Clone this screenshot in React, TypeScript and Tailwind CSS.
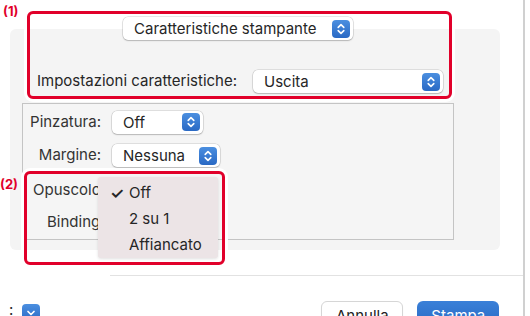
import React from "react";

const Stepper = () => (
    <span className="w-[18px] h-[18px] rounded-[4px] bg-gradient-to-b from-[#4b8fe0] to-[#2a69c4] flex items-center justify-center shrink-0">
        <svg width="18" height="18" viewBox="0 0 18 18" fill="none">
            <path d="M6.2 7.4 L9 4.6 L11.8 7.4" stroke="white" strokeWidth="1.6" strokeLinecap="round" strokeLinejoin="round" />
            <path d="M6.2 10.6 L9 13.4 L11.8 10.6" stroke="white" strokeWidth="1.6" strokeLinecap="round" strokeLinejoin="round" />
        </svg>
    </span>
);

const Popup = ({ label, className }: { label: string; className: string }) => (
    <div
        className={`h-[23px] shrink-0 rounded-[5px] bg-white shadow-[0_0_0_0.5px_rgba(0,0,0,0.18),0_1px_1.5px_rgba(0,0,0,0.18)] flex items-center pl-[11px] pr-[3px] ${className}`}
    >
        <span className="flex-1 text-[15px] leading-none text-[#262626]">{label}</span>
        <Stepper />
    </div>
);

const App = () => {
    return (
        <div className="w-[530px] h-[316px] bg-white flex overflow-hidden font-['Inter',Arial,sans-serif] text-[#262626]">
            <div className="w-[523px] relative flex flex-col pt-[29px]">
                {/* main panel */}
                <div className="shrink-0 ml-[10px] w-[490px] h-[221px] rounded-[6px] bg-[#f4f4f4] flex flex-col">
                    <Popup label="Caratteristiche stampante" className="-mt-[12px] ml-[113px] w-[230px]" />

                    <div className="shrink-0 mt-[30px] flex items-center h-[23px]">
                        <span className="ml-[27px] w-[216px] text-[15px]">Impostazioni caratteristiche:</span>
                        <Popup label="Uscita" className="w-[190px]" />
                    </div>

                    <div className="shrink-0 mt-[10px] ml-[12px] w-[432px] h-[137px] border border-[#c4c4c4] bg-[#f5f5f5] flex flex-col pt-[6px]">
                        <div className="shrink-0 flex items-center h-[24px]">
                            <span className="w-[78px] text-right text-[15px] text-[#333]">Pinzatura:</span>
                            <Popup label="Off" className="ml-[11px] w-[91px]" />
                        </div>
                        <div className="shrink-0 mt-[10px] flex items-center h-[23px]">
                            <span className="w-[78px] text-right text-[15px] text-[#333]">Margine:</span>
                            <Popup label="Nessuna" className="ml-[11px] w-[108px]" />
                        </div>
                        <div className="shrink-0 mt-[11px] flex items-center h-[24px]">
                            <span className="ml-[10px] text-[15px] text-[#333]">Opuscolo</span>
                        </div>
                        <div className="shrink-0 mt-[8px] flex items-center h-[24px]">
                            <span className="ml-[24px] text-[15px] text-[#333]">Binding</span>
                        </div>
                    </div>
                </div>

                <div className="shrink-0 mt-[25px] ml-[110px] h-px bg-[#e2e2e2]" />

                <div className="shrink-0 mt-[25px] flex items-start">
                    <span className="ml-[9px] mt-[1px] text-[15px] leading-none">:</span>
                    <span className="ml-[9px] mt-[3px] w-[18px] h-[18px] rounded-[4px] bg-gradient-to-b from-[#4b8fe0] to-[#2a69c4] flex items-center justify-center">
                        <svg width="18" height="18" viewBox="0 0 18 18" fill="none">
                            <path d="M6 7.5 L9 10.5 L12 7.5" stroke="white" strokeWidth="1.7" strokeLinecap="round" strokeLinejoin="round" />
                        </svg>
                    </span>
                    <button className="ml-[281px] w-[82px] h-[24px] rounded-[6px] bg-white border border-[#d6d6d6] shadow-[0_1px_1px_rgba(0,0,0,0.08)] text-[15px] text-[#222] leading-none pt-[5px]">
                        Annulla
                    </button>
                    <button className="ml-[14px] w-[82px] h-[24px] rounded-[6px] bg-gradient-to-b from-[#3a80d8] to-[#2a6cc6] text-[15px] text-white leading-none pt-[5px]">
                        Stampa
                    </button>
                </div>

                {/* annotation 1 */}
                <span className="absolute left-[3px] top-[2px] text-[13px] font-bold text-[#e1002a]">(1)</span>
                <div className="absolute left-[27px] top-[11px] w-[425px] h-[88px] rounded-[6px] border-[3px] border-[#e1002a] shadow-[0_0_0_3px_white]" />

                {/* annotation 2 */}
                <span className="absolute left-[0px] top-[175px] text-[13px] font-bold text-[#e1002a]">(2)</span>
                <div className="absolute left-[24px] top-[171px] w-[201px] h-[94px] rounded-[6px] border-[3px] border-[#e1002a] shadow-[0_0_0_3px_white]" />

                {/* popup menu */}
                <div className="absolute left-[98px] top-[177px] w-[120px] h-[81px] bg-[#ece4e6] rounded-[3px] shadow-[0_1px_3px_rgba(0,0,0,0.12)] flex flex-col pt-[3px] text-[15px] text-[#262626]">
                    <div className="h-[27px] flex items-center">
                        <span className="w-[31px] pl-[12px] text-[16px] font-semibold">✓</span>
                        <span>Off</span>
                    </div>
                    <div className="h-[26px] flex items-center pl-[31px]">2 su 1</div>
                    <div className="h-[26px] flex items-center pl-[31px]">Affiancato</div>
                </div>
            </div>
            <div className="w-[2px] bg-[#d0d0d0]" />
            <div className="flex-1 bg-white" />
        </div>
    );
};

export default App;
